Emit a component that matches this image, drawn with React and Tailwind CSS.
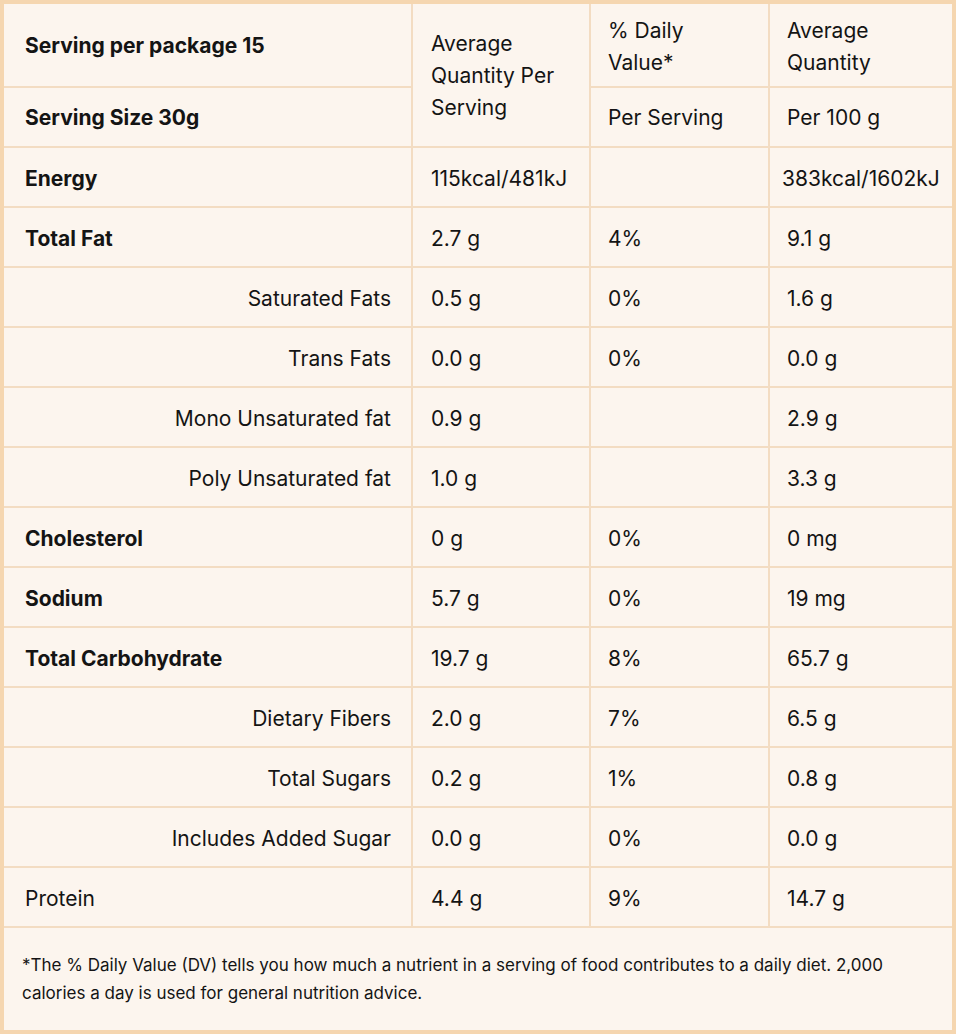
import React from 'react';

const rows = [
  { name: 'Energy', bold: true, serving: '115kcal/481kJ', dv: '', per100: '383kcal/1602kJ' },
  { name: 'Total Fat', bold: true, serving: '2.7 g', dv: '4%', per100: '9.1 g' },
  { name: 'Saturated Fats', sub: true, serving: '0.5 g', dv: '0%', per100: '1.6 g' },
  { name: 'Trans Fats', sub: true, serving: '0.0 g', dv: '0%', per100: '0.0 g' },
  { name: 'Mono Unsaturated fat', sub: true, serving: '0.9 g', dv: '', per100: '2.9 g' },
  { name: 'Poly Unsaturated fat', sub: true, serving: '1.0 g', dv: '', per100: '3.3 g' },
  { name: 'Cholesterol', bold: true, serving: '0 g', dv: '0%', per100: '0 mg' },
  { name: 'Sodium', bold: true, serving: '5.7 g', dv: '0%', per100: '19 mg' },
  { name: 'Total Carbohydrate', bold: true, serving: '19.7 g', dv: '8%', per100: '65.7 g' },
  { name: 'Dietary Fibers', sub: true, serving: '2.0 g', dv: '7%', per100: '6.5 g' },
  { name: 'Total Sugars', sub: true, serving: '0.2 g', dv: '1%', per100: '0.8 g' },
  { name: 'Includes Added Sugar', sub: true, serving: '0.0 g', dv: '0%', per100: '0.0 g' },
  { name: 'Protein', serving: '4.4 g', dv: '9%', per100: '14.7 g' },
];

export default function App() {
  return (
    <div className="w-[956px] h-[1034px] border-4 border-[#f5d6b0] bg-[#f5d6b0] font-['Inter',sans-serif] text-[#141414]">
      <div className="grid grid-cols-[407px_176px_177px_182px] grid-rows-[82px_58px] auto-rows-[58px] gap-[2px] bg-[#f3dcc2] h-full">
        {/* header */}
        <div className="bg-[#fcf5ee] flex items-center pl-[21px] pt-[2px] text-[21px] font-bold">Serving per package 15</div>
        <div className="bg-[#fcf5ee] row-span-2 flex items-center pl-[18px] pr-4 pt-[2px] text-[21px] leading-[32px]">
          Average Quantity Per Serving
        </div>
        <div className="bg-[#fcf5ee] flex items-center pl-[17px] pt-[4px] text-[21px] leading-[32px]">
          <span className="w-[110px]">% Daily Value*</span>
        </div>
        <div className="bg-[#fcf5ee] flex items-center pl-[17px] pt-[4px] text-[21px] leading-[32px]">
          <span className="w-[110px]">Average Quantity</span>
        </div>
        <div className="bg-[#fcf5ee] flex items-center pl-[21px] pt-[2px] text-[21px] font-bold">Serving Size 30g</div>
        <div className="bg-[#fcf5ee] flex items-center pl-[17px] pt-[2px] text-[21px]">Per Serving</div>
        <div className="bg-[#fcf5ee] flex items-center pl-[17px] pt-[2px] text-[21px]">Per 100 g</div>

        {rows.map((r) => (
          <React.Fragment key={r.name}>
            <div
              className={`bg-[#fcf5ee] flex items-center pt-[3px] text-[21px] ${
                r.sub ? 'justify-end pr-5' : 'pl-[21px]'
              } ${r.bold ? 'font-bold' : ''}`}
            >
              {r.name}
            </div>
            <div className="bg-[#fcf5ee] flex items-center pl-[18px] pt-[3px] text-[21px]">{r.serving}</div>
            <div className="bg-[#fcf5ee] flex items-center pl-[17px] pt-[3px] text-[21px]">{r.dv}</div>
            <div className={`bg-[#fcf5ee] flex items-center pt-[3px] text-[21px] whitespace-nowrap ${r.per100.length > 10 ? 'pl-3' : 'pl-[17px]'}`}>
              {r.per100}
            </div>
          </React.Fragment>
        ))}

        <div className="bg-[#fcf5ee] col-span-4 flex items-center px-[18px] text-[17px] leading-[28px] h-[102px]">
          <p className="w-[900px]">
            *The % Daily Value (DV) tells you how much a nutrient in a serving of food contributes to a daily diet. 2,000 calories a day is used for general nutrition advice.
          </p>
        </div>
      </div>
    </div>
  );
}
